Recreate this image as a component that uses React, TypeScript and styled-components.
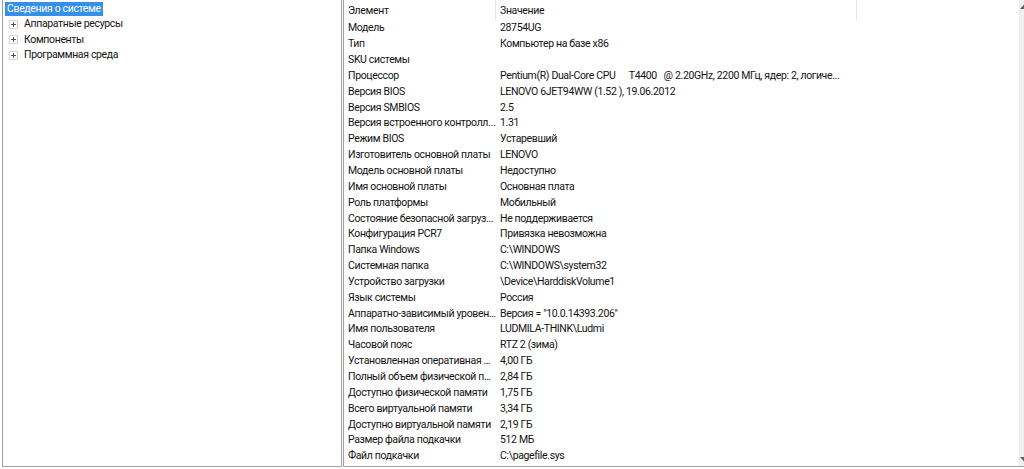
import React from 'react'
import styled, { createGlobalStyle, css } from 'styled-components'

const GlobalStyle = createGlobalStyle`
  html, body {
    margin: 0;
    padding: 0;
    overflow: hidden;
    background: #ffffff;
  }
  body {
    font-family: Roboto, "Noto Sans", sans-serif;
    font-size: 10.5px;
    letter-spacing: -0.35px;
    color: #121212;
  }
`

const Window = styled.div`
  display: flex;
  width: 1036px;
  height: 469px;
  padding-left: 2px;
  gap: 1px;
  box-sizing: border-box;
  background: #ffffff;
`

const TreePane = styled.div`
  width: 340px;
  height: 467px;
  box-sizing: border-box;
  border-left: 1px solid #a0a0a0;
  border-right: 1px solid #a0a0a0;
  border-bottom: 1px solid #a0a0a0;
  padding: 1px 0 0 2px;
  display: flex;
  flex-direction: column;
`

const TreeItem = styled.div<{ $level: number }>`
  display: flex;
  align-items: center;
  height: 15.5px;
  padding-left: ${({ $level }) => ($level === 0 ? 0 : 4)}px;
  gap: 4px;
  white-space: nowrap;
`

const TreeLabel = styled.span<{ $selected?: boolean }>`
  padding: 0 2px;
  line-height: 14px;
  ${({ $selected }) => $selected && css`
    background: #3590ea;
    color: #ffffff;
  `}
`

const Expander = styled.svg`
  flex: none;
  width: 9px;
  height: 9px;
`

const ListPane = styled.div`
  flex: 1;
  height: 467px;
  box-sizing: border-box;
  border-left: 1px solid #a0a0a0;
  border-bottom: 1px solid #a0a0a0;
  display: flex;
`

const Table = styled.div`
  flex: 1;
  display: flex;
  flex-direction: column;
  overflow: hidden;
`

const HeaderRow = styled.div`
  display: grid;
  grid-template-columns: 152px 361px 1fr;
  height: 20px;
`

const HeaderCell = styled.div<{ $last?: boolean }>`
  display: flex;
  align-items: center;
  padding-left: 4px;
  border-right: ${({ $last }) => ($last ? 'none' : '1px solid #e6e6e6')};
`

const Row = styled.div`
  display: grid;
  grid-template-columns: 152px 361px 1fr;
  height: 15.85px;
  align-items: center;
`

const Cell = styled.div`
  padding-left: 4px;
  white-space: pre;
  overflow: hidden;
  text-overflow: ellipsis;
`

const Scrollbar = styled.div`
  width: 17px;
  flex: none;
  background: #f0f0f0;
  border-left: 1px solid #ececec;
  display: flex;
  flex-direction: column;
  justify-content: space-between;
  align-items: center;
  padding: 4px 0;
  box-sizing: border-box;
`

const Arrow = styled.svg`
  width: 9px;
  height: 5px;
  margin-left: -8px;
`

const treeChildren = ['Аппаратные ресурсы', 'Компоненты', 'Программная среда']

const rows: [string, string][] = [
  ['Модель', '28754UG'],
  ['Тип', 'Компьютер на базе x86'],
  ['SKU системы', ''],
  ['Процессор', 'Pentium(R) Dual-Core CPU      T4400   @ 2.20GHz, 2200 МГц, ядер: 2, логиче...'],
  ['Версия BIOS', 'LENOVO 6JET94WW (1.52 ), 19.06.2012'],
  ['Версия SMBIOS', '2.5'],
  ['Версия встроенного контролл...', '1.31'],
  ['Режим BIOS', 'Устаревший'],
  ['Изготовитель основной платы', 'LENOVO'],
  ['Модель основной платы', 'Недоступно'],
  ['Имя основной платы', 'Основная плата'],
  ['Роль платформы', 'Мобильный'],
  ['Состояние безопасной загруз...', 'Не поддерживается'],
  ['Конфигурация PCR7', 'Привязка невозможна'],
  ['Папка Windows', 'C:\\WINDOWS'],
  ['Системная папка', 'C:\\WINDOWS\\system32'],
  ['Устройство загрузки', '\\Device\\HarddiskVolume1'],
  ['Язык системы', 'Россия'],
  ['Аппаратно-зависимый уровен...', 'Версия = "10.0.14393.206"'],
  ['Имя пользователя', 'LUDMILA-THINK\\Ludmi'],
  ['Часовой пояс', 'RTZ 2 (зима)'],
  ['Установленная оперативная п...', '4,00 ГБ'],
  ['Полный объем физической па...', '2,84 ГБ'],
  ['Доступно физической памяти', '1,75 ГБ'],
  ['Всего виртуальной памяти', '3,34 ГБ'],
  ['Доступно виртуальной памяти', '2,19 ГБ'],
  ['Размер файла подкачки', '512 МБ'],
  ['Файл подкачки', 'C:\\pagefile.sys'],
]

const PlusBox = () => (
  <Expander viewBox="0 0 9 9">
    <rect x="0.5" y="0.5" width="8" height="8" fill="#fff" stroke="#a8a8a8" strokeDasharray="1 1" />
    <path d="M2 4.5h5M4.5 2v5" stroke="#555" strokeWidth="1" />
  </Expander>
)

const App: React.FC = () => (
  <>
    <GlobalStyle />
    <Window>
      <TreePane>
        <TreeItem $level={0}>
          <TreeLabel $selected>Сведения о системе</TreeLabel>
        </TreeItem>
        {treeChildren.map((name) => (
          <TreeItem key={name} $level={1}>
            <PlusBox />
            <TreeLabel>{name}</TreeLabel>
          </TreeItem>
        ))}
      </TreePane>
      <ListPane>
        <Table>
          <HeaderRow>
            <HeaderCell>Элемент</HeaderCell>
            <HeaderCell>Значение</HeaderCell>
            <HeaderCell $last />
          </HeaderRow>
          {rows.map(([name, value]) => (
            <Row key={name}>
              <Cell>{name}</Cell>
              <Cell>{value}</Cell>
              <Cell />
            </Row>
          ))}
        </Table>
        <Scrollbar>
          <Arrow viewBox="0 0 9 5">
            <path d="M0 5L4.5 0L9 5z" fill="#606060" />
          </Arrow>
          <Arrow viewBox="0 0 9 5">
            <path d="M0 0L4.5 5L9 0z" fill="#606060" />
          </Arrow>
        </Scrollbar>
      </ListPane>
    </Window>
  </>
)

export default App
